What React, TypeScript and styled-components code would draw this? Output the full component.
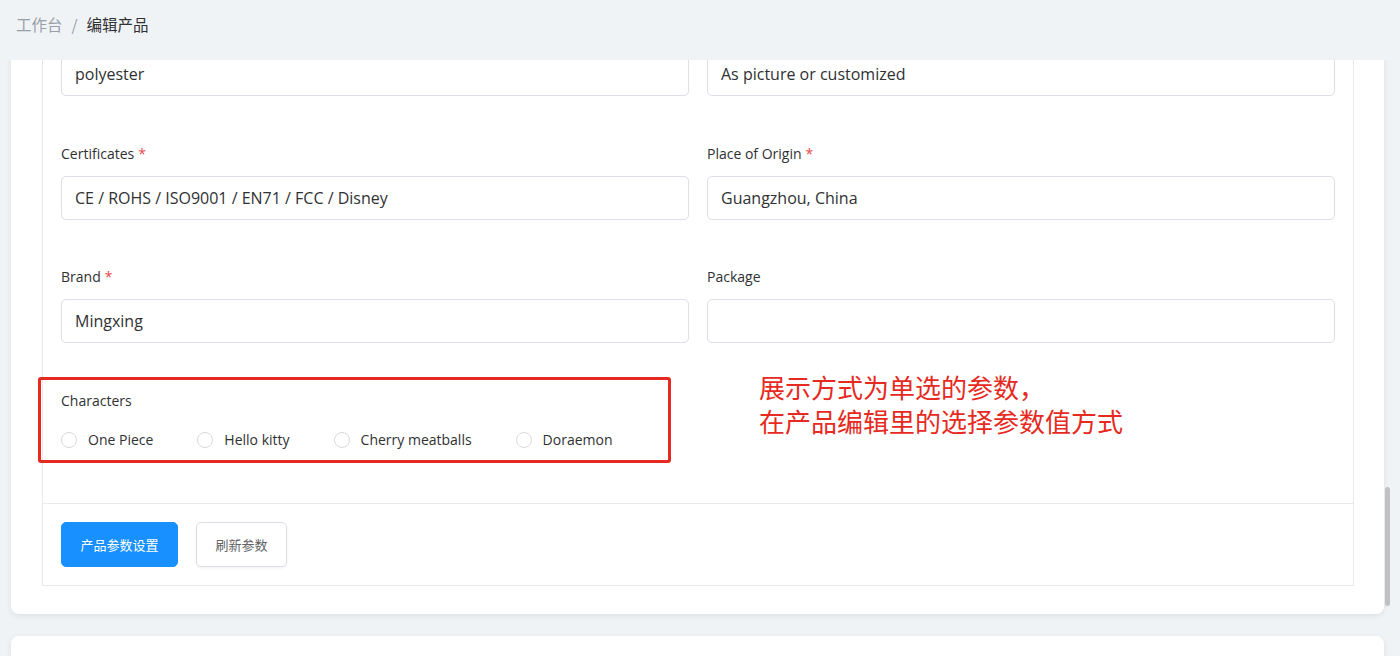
import React, { useLayoutEffect, useRef } from 'react';
import styled, { createGlobalStyle } from 'styled-components';

const GlobalStyle = createGlobalStyle`
  html, body {
    margin: 0;
    padding: 0;
    background: #f0f3f6;
    font-family: "Open Sans", "Noto Sans CJK SC", sans-serif;
    overflow: hidden;
  }
`;

const Page = styled.div`
  position: relative;
  width: 1400px;
  height: 656px;
  display: flex;
  flex-direction: column;
  background: #f0f3f6;
`;

const Header = styled.div`
  position: relative;
  z-index: 1;
  height: 60px;
  flex: none;
  display: flex;
  align-items: center;
  gap: 9px;
  padding: 0 16px 12px;
  box-sizing: border-box;
  font-family: "Noto Sans CJK SC", sans-serif;
  font-size: 15.5px;
  background: #f0f3f6;
`;

const Crumb = styled.span<{ $current?: boolean }>`
  color: ${({ $current }) => ($current ? '#303133' : '#97a0a8')};
`;

const Viewport = styled.div`
  flex: 1;
  overflow: hidden;
`;

const Content = styled.div`
  display: flex;
  flex-direction: column;
  gap: 22px;
  padding: 20px 16px 0 11px;
`;

const Card = styled.div<{ $tall?: boolean }>`
  background: #fff;
  border-radius: 8px;
  box-shadow: 0 2px 6px rgba(0, 0, 0, 0.08);
  padding: 20px 30px 28px 31px;
  min-height: ${({ $tall }) => ($tall ? '200px' : 'auto')};
`;

const Box = styled.div`
  border: 1px solid #e8e8e8;
`;

const FormGrid = styled.div`
  display: grid;
  grid-template-columns: 1fr 1fr;
  column-gap: 18px;
  row-gap: 47.5px;
  padding: 40px 18px 53px;
`;

const Field = styled.div`
  position: relative;
  display: flex;
  flex-direction: column;
`;

const Label = styled.label`
  font-size: 14px;
  line-height: 20px;
  color: #303133;
  margin-bottom: 12px;
`;

const Required = styled.span`
  color: #e5484d;
  margin-left: 4px;
`;

const Input = styled.input`
  height: 44px;
  box-sizing: border-box;
  border: 1px solid #dcdfe6;
  border-radius: 5px;
  padding: 0 13px;
  font-family: "Open Sans", sans-serif;
  font-size: 16px;
  color: #303133;
  background: #fff;
  outline: none;
`;

const RadioRow = styled.div`
  display: flex;
  align-items: center;
  gap: 44px;
  margin-top: 7px;
  height: 20px;
`;

const RadioItem = styled.span`
  display: flex;
  align-items: center;
  gap: 11px;
  font-size: 14px;
  color: #303133;
`;

const RadioDot = styled.span`
  width: 16px;
  height: 16px;
  box-sizing: border-box;
  border: 1px solid #d9d9d9;
  border-radius: 50%;
  background: #fff;
`;

const Highlight = styled.div`
  position: absolute;
  top: -14px;
  bottom: -13px;
  left: -23px;
  width: 633px;
  border: 3px solid #e62a22;
  border-radius: 3px;
  box-sizing: border-box;
  pointer-events: none;
`;

const Note = styled.div`
  margin-top: -21px;
  padding-left: 52px;
  font-family: "Noto Sans CJK SC", sans-serif;
  font-size: 26px;
  line-height: 34px;
  color: #e62a22;
`;

const Footer = styled.div`
  display: flex;
  gap: 18px;
  border-top: 1px solid #ebebeb;
  padding: 18px 18px 18px;
`;

const Button = styled.button<{ $primary?: boolean }>`
  height: 45px;
  padding: 0 18.5px;
  border-radius: 5px;
  font-family: "Noto Sans CJK SC", sans-serif;
  font-size: 13px;
  cursor: pointer;
  border: 1px solid ${({ $primary }) => ($primary ? '#1890ff' : '#dcdfe6')};
  background: ${({ $primary }) => ($primary ? '#1890ff' : '#fff')};
  color: ${({ $primary }) => ($primary ? '#fff' : '#606266')};
  box-shadow: ${({ $primary }) => ($primary ? 'none' : '0 1px 3px rgba(0,0,0,0.06)')};
`;

const ScrollThumb = styled.div`
  position: absolute;
  z-index: 2;
  left: 1385px;
  top: 487px;
  width: 5px;
  height: 119px;
  border-radius: 3px;
  background: #c1c1c1;
`;

type FieldDef = { label?: string; value: string; required?: boolean };

// the first row's labels are scrolled away above the header
const rows: FieldDef[] = [
  { value: 'polyester' },
  { value: 'As picture or customized' },
  { label: 'Certificates', value: 'CE / ROHS / ISO9001 / EN71 / FCC / Disney', required: true },
  { label: 'Place of Origin', value: 'Guangzhou, China', required: true },
  { label: 'Brand', value: 'Mingxing', required: true },
  { label: 'Package', value: '' },
];

const characters = ['One Piece', 'Hello kitty', 'Cherry meatballs', 'Doraemon'];

export default function App() {
  const viewRef = useRef<HTMLDivElement>(null);
  const firstRef = useRef<HTMLInputElement>(null);

  // scroll so the first input's bottom sits 36px under the header
  useLayoutEffect(() => {
    const view = viewRef.current;
    const first = firstRef.current;
    if (!view || !first) return;
    const v = view.getBoundingClientRect();
    const f = first.getBoundingClientRect();
    view.scrollTop = f.bottom - v.top - 36;
  }, []);

  return (
    <Page>
      <GlobalStyle />
      <Header>
        <Crumb>工作台</Crumb>
        <Crumb>/</Crumb>
        <Crumb $current>编辑产品</Crumb>
      </Header>
      <Viewport ref={viewRef}>
        <Content>
          <Card>
            <Box>
              <FormGrid>
                {rows.map((r, i) => (
                  <Field key={i}>
                    {r.label && (
                      <Label>
                        {r.label}
                        {r.required && <Required>*</Required>}
                      </Label>
                    )}
                    <Input ref={i === 0 ? firstRef : undefined} readOnly value={r.value} />
                  </Field>
                ))}
                <Field>
                  <Label>Characters</Label>
                  <RadioRow>
                    {characters.map((c) => (
                      <RadioItem key={c}>
                        <RadioDot />
                        {c}
                      </RadioItem>
                    ))}
                  </RadioRow>
                  <Highlight />
                </Field>
                <Note>
                  展示方式为单选的参数，
                  <br />
                  在产品编辑里的选择参数值方式
                </Note>
              </FormGrid>
              <Footer>
                <Button $primary>产品参数设置</Button>
                <Button>刷新参数</Button>
              </Footer>
            </Box>
          </Card>
          <Card $tall />
        </Content>
      </Viewport>
      <ScrollThumb />
    </Page>
  );
}
